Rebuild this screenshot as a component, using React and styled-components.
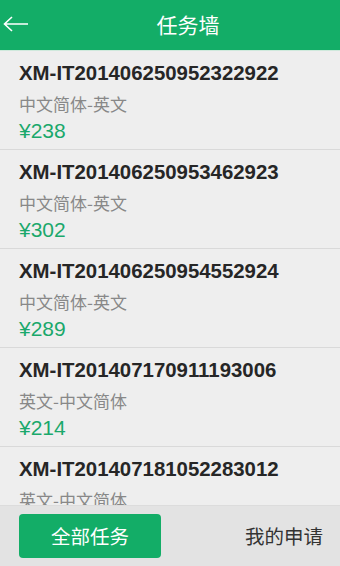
import styled, { createGlobalStyle } from 'styled-components'

const GlobalStyle = createGlobalStyle`
  html, body {
    margin: 0;
    padding: 0;
  }
  body {
    font-family: "Liberation Sans", "Noto Sans CJK SC", sans-serif;
    background: #eeeeee;
  }
  * {
    box-sizing: border-box;
  }
`

const Page = styled.div`
  width: 340px;
  height: 566px;
  display: flex;
  flex-direction: column;
  overflow: hidden;
  background: #eeeeee;
`

const Header = styled.div`
  height: 51px;
  flex-shrink: 0;
  display: flex;
  align-items: center;
  background: #13ad67;
  border-bottom: 1px solid #cfe9dc;
`

const Back = styled.div`
  width: 36px;
  height: 50px;
  display: flex;
  align-items: center;
  padding-left: 3px;
  padding-bottom: 2px;
`

const Title = styled.h1`
  flex: 1;
  margin: 0;
  text-align: center;
  color: #fff;
  font-family: "Noto Sans CJK SC", sans-serif;
  font-size: 21px;
  font-weight: 400;
  line-height: 50px;
  padding-bottom: 2px;
`

const List = styled.div`
  flex: 1;
  overflow: hidden;
`

const Item = styled.div`
  height: 99px;
  padding: 10px 19px 0;
  border-bottom: 1px solid #d9d9d9;
`

const Code = styled.div`
  font-size: 20.4px;
  font-weight: 700;
  line-height: 24px;
  color: #262626;
`

const Lang = styled.div`
  margin-top: 9px;
  font-family: "Noto Sans CJK SC", sans-serif;
  font-size: 17px;
  line-height: 20px;
  color: #888;
`

const Price = styled.div`
  margin-top: 5px;
  font-size: 21px;
  line-height: 24px;
  color: #1aa86b;
`

const Footer = styled.div`
  height: 61px;
  flex-shrink: 0;
  display: flex;
  align-items: center;
  justify-content: space-between;
  padding: 0 17px 1px 19px;
  background: #e3e3e3;
  border-top: 1px solid #dcdcdc;
`

const Tab = styled.button`
  width: 142px;
  height: 44px;
  border: none;
  border-radius: 4px;
  background: ${p => (p.active ? '#13ad67' : 'transparent')};
  color: ${p => (p.active ? '#fff' : '#333')};
  font-family: "Noto Sans CJK SC", sans-serif;
  font-size: 19.5px;
  padding: 0;
  text-align: ${p => (p.active ? 'center' : 'right')};
`

const tasks = [
  { code: 'XM-IT201406250952322922', lang: '中文简体-英文', price: '¥238' },
  { code: 'XM-IT201406250953462923', lang: '中文简体-英文', price: '¥302' },
  { code: 'XM-IT201406250954552924', lang: '中文简体-英文', price: '¥289' },
  { code: 'XM-IT201407170911193006', lang: '英文-中文简体', price: '¥214' },
  { code: 'XM-IT201407181052283012', lang: '英文-中文简体', price: '¥256' },
]

const App = () => {
  return (
    <Page>
      <GlobalStyle />
      <Header>
        <Back>
          <svg width="26" height="16" viewBox="0 0 26 16">
            <path d="M1 8 H25 M9 1 L1.5 8 L9 15" stroke="#fff" strokeWidth="1.6" fill="none" />
          </svg>
        </Back>
        <Title>任务墙</Title>
      </Header>
      <List>
        {tasks.map(t => (
          <Item key={t.code}>
            <Code>{t.code}</Code>
            <Lang>{t.lang}</Lang>
            <Price>{t.price}</Price>
          </Item>
        ))}
      </List>
      <Footer>
        <Tab active>全部任务</Tab>
        <Tab>我的申请</Tab>
      </Footer>
    </Page>
  )
}

export default App
